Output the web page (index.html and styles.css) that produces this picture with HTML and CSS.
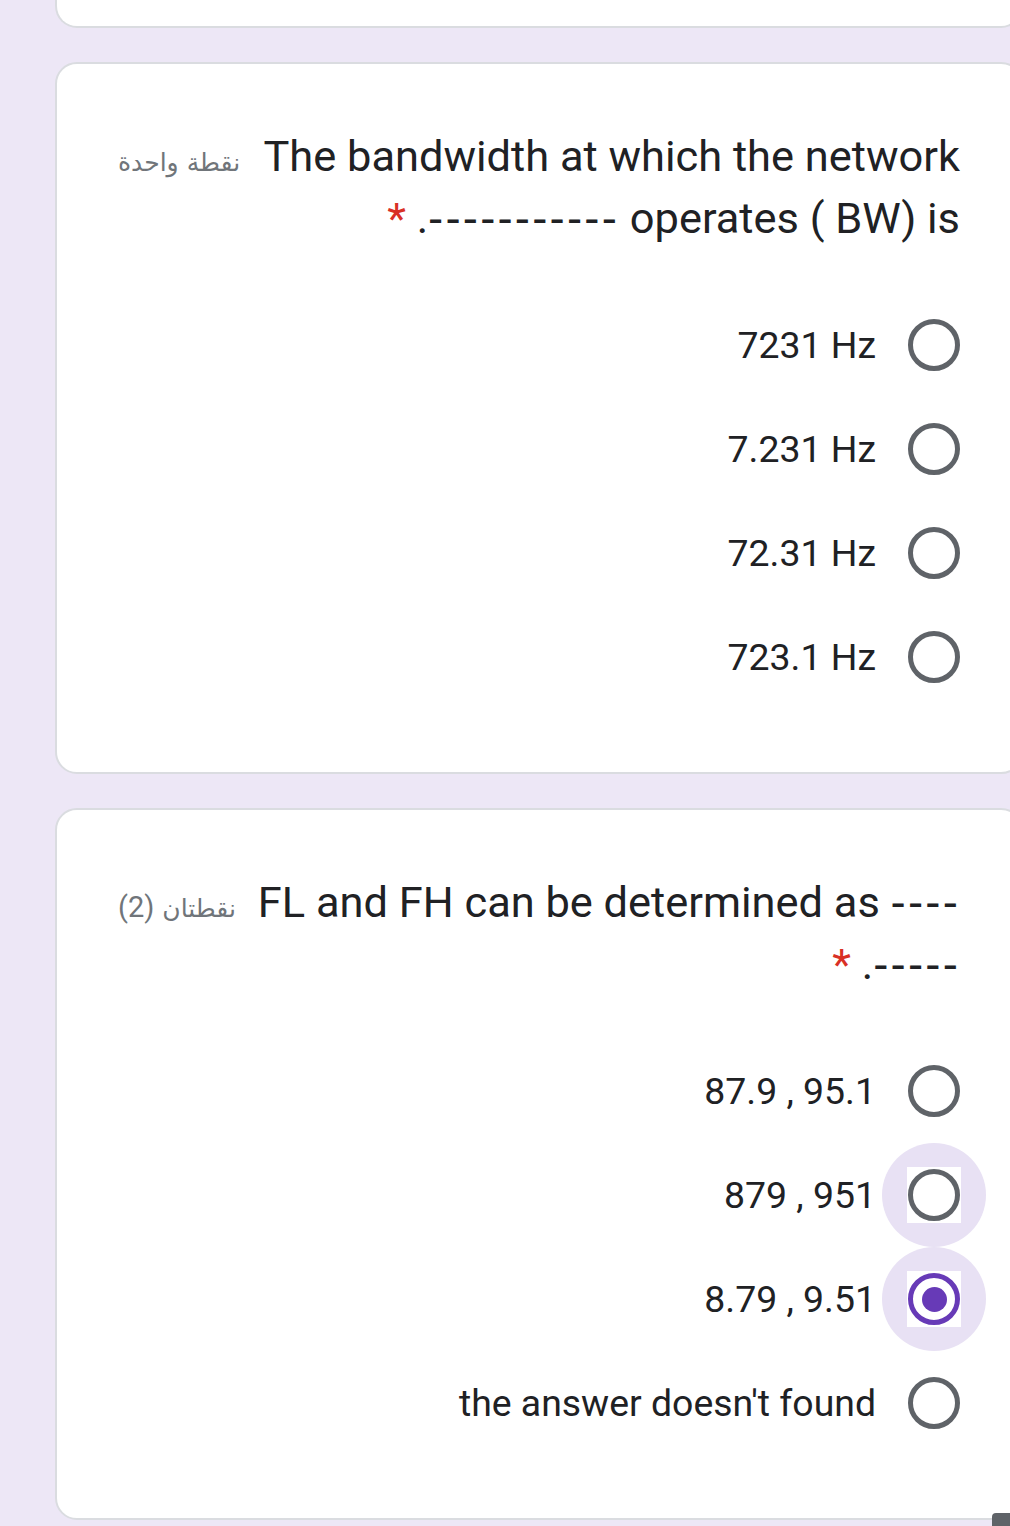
FILE: index.html
```html
<!DOCTYPE html>
<html lang="en">
<head>
<meta charset="utf-8">
<title>Quiz</title>
<link rel="stylesheet" href="styles.css">
</head>
<body>
<main class="page">
  <section class="card card-prev"></section>

  <section class="card">
    <div class="q-head">
      <span class="points" dir="rtl">نقطة واحدة</span>
      <h2 class="q-title">
        <span class="line">The bandwidth at which the network</span>
        <span class="line"><span class="req">*</span> .<span class="dashes">-----------</span> operates ( BW) is</span>
      </h2>
    </div>
    <ul class="options">
      <li class="option"><span class="opt-text">7231 Hz</span><span class="radio-box"><span class="radio"></span></span></li>
      <li class="option"><span class="opt-text">7.231 Hz</span><span class="radio-box"><span class="radio"></span></span></li>
      <li class="option"><span class="opt-text">72.31 Hz</span><span class="radio-box"><span class="radio"></span></span></li>
      <li class="option"><span class="opt-text">723.1 Hz</span><span class="radio-box"><span class="radio"></span></span></li>
    </ul>
  </section>

  <section class="card">
    <div class="q-head">
      <span class="points" dir="rtl">نقطتان <span class="num">(2)</span></span>
      <h2 class="q-title">
        <span class="line">FL and FH can be determined as <span class="dashes">----</span></span>
        <span class="line"><span class="req">*</span> .<span class="dashes">-----</span></span>
      </h2>
    </div>
    <ul class="options">
      <li class="option"><span class="opt-text">87.9 , 95.1</span><span class="radio-box"><span class="radio"></span></span></li>
      <li class="option focused"><span class="opt-text">879 , 951</span><span class="radio-box"><span class="radio"></span></span></li>
      <li class="option focused"><span class="opt-text">8.79 , 9.51</span><span class="radio-box"><span class="radio checked"></span></span></li>
      <li class="option"><span class="opt-text">the answer doesn't found</span><span class="radio-box"><span class="radio"></span></span></li>
    </ul>
  </section>
</main>
<div class="fab-edge"></div>
</body>
</html>
```

FILE: styles.css
```css
html, body {
  margin: 0;
  padding: 0;
}

body {
  background: #ede7f6;
  font-family: Roboto, "DejaVu Sans", sans-serif;
  color: #202124;
  width: 1010px;
  height: 1526px;
  overflow: hidden;
  position: relative;
}

.page {
  padding-left: 55px;
}

.card {
  box-sizing: border-box;
  width: 968px;
  background: #fff;
  border: 2px solid #dadce0;
  border-radius: 22px;
  padding: 62px 61px 63px 61px;
  margin-bottom: 34px;
}

.card-prev {
  height: 28px;
  padding: 0;
  border-top: none;
  border-radius: 0 0 22px 22px;
}

.q-head {
  display: flex;
  align-items: baseline;
  gap: 18px;
}

.points {
  flex: none;
  font-size: 25px;
  color: #70757a;
  font-family: "DejaVu Sans", sans-serif;
  white-space: nowrap;
}

.points .num {
  font-family: Roboto, sans-serif;
  font-size: 29px;
}

.q-title {
  flex: 1;
  margin: 0;
  font-weight: 400;
  font-size: 43.4px;
  line-height: 62px;
  text-align: right;
  color: #202124;
}

.line {
  display: block;
  white-space: nowrap;
}

.req {
  color: #d93025;
}

.dashes {
  font-family: "DejaVu Sans", sans-serif;
  font-size: 42px;
  letter-spacing: 2.2px;
}

.options {
  list-style: none;
  margin: 43px 0 0;
  padding: 0;
}

.option {
  display: flex;
  justify-content: flex-end;
  align-items: center;
  gap: 32px;
  height: 104px;
}

.opt-text {
  font-size: 37.4px;
  color: #202124;
  white-space: nowrap;
}

.radio-box {
  flex: none;
  width: 52px;
  height: 52px;
  position: relative;
  isolation: isolate;
  display: flex;
  align-items: center;
  justify-content: center;
}

.focused .radio-box::before {
  content: "";
  position: absolute;
  left: -26px;
  top: -26px;
  width: 104px;
  height: 104px;
  border-radius: 50%;
  background: #e8e1f4;
  z-index: -1;
}

.focused .radio-box::after {
  content: "";
  position: absolute;
  left: -1px;
  top: -2px;
  width: 54px;
  height: 56px;
  background: #fff;
  z-index: -1;
}

.radio {
  box-sizing: border-box;
  width: 52px;
  height: 52px;
  border: 5.5px solid #5f6368;
  border-radius: 50%;
  position: relative;
}

.radio.checked {
  border-color: #673ab7;
}

.radio.checked::after {
  content: "";
  position: absolute;
  left: 50%;
  top: 50%;
  width: 25px;
  height: 25px;
  margin: -12.5px 0 0 -12.5px;
  border-radius: 50%;
  background: #673ab7;
}

.fab-edge {
  position: absolute;
  right: 0;
  bottom: 0;
  width: 18px;
  height: 13px;
  background: #5f6368;
  border-top-left-radius: 4px;
}
```
